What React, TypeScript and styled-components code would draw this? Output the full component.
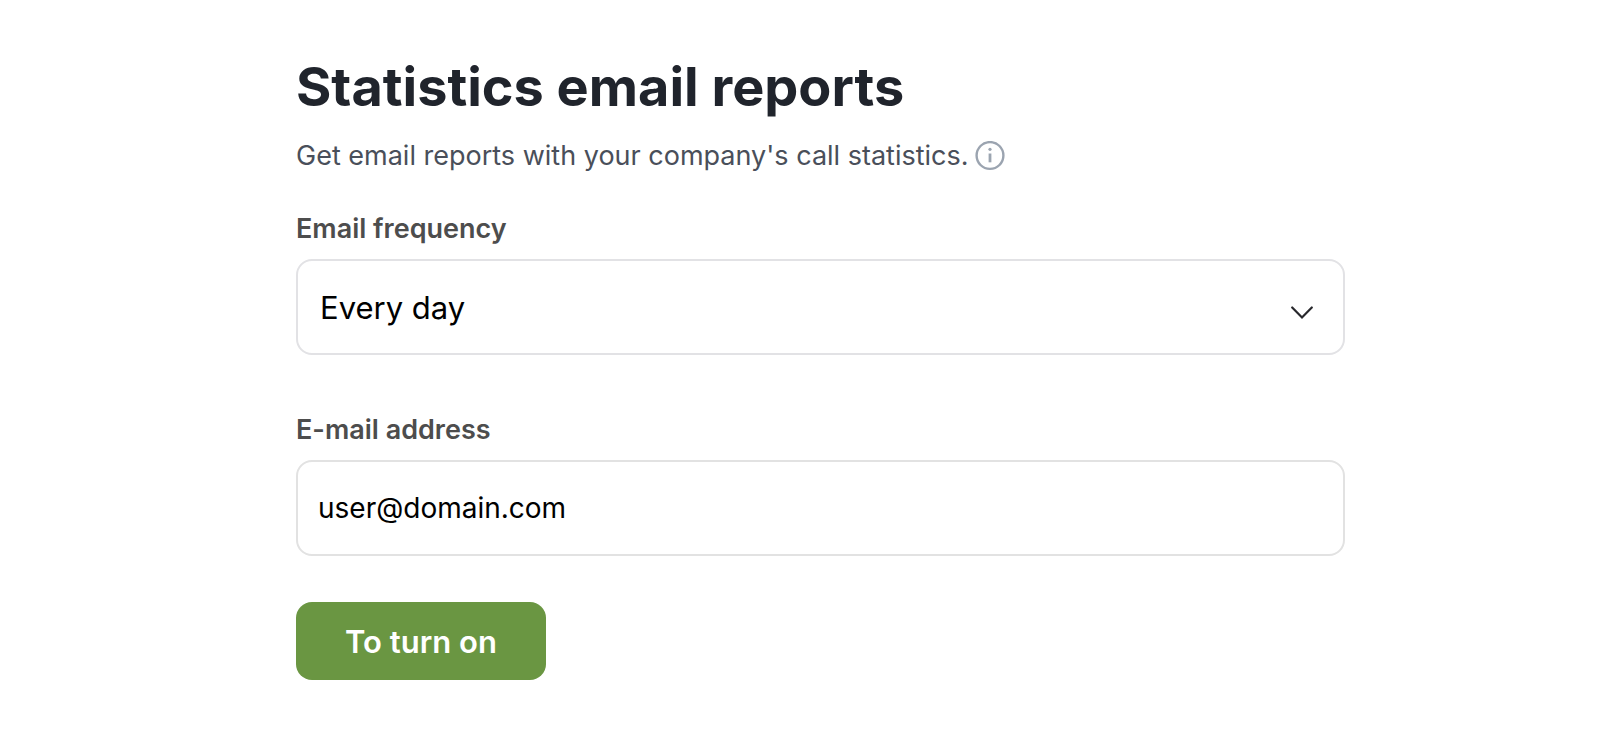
import React from "react";
import styled, { createGlobalStyle } from "styled-components";

const GlobalStyle = createGlobalStyle`
  *, *::before, *::after { box-sizing: border-box; }
  body { margin: 0; background: #fff; font-family: Inter, "Liberation Sans", sans-serif; }
`;
const Page = styled.main`
  padding: 53px 255px 48px 296px;
`;
const Title = styled.h1`
  margin: 0;
  font-size: 54px;
  line-height: 68px;
  font-weight: 700;
  color: #20242c;
`;
const Intro = styled.p`
  display: flex;
  align-items: center;
  gap: 6px;
  margin: 15px 0 35px;
  font-size: 27px;
  line-height: 40px;
  color: #4a4f5a;
`;
const InfoButton = styled.button`
  display: flex;
  flex: none;
  padding: 0;
  border: 0;
  background: none;
  color: #9ba4b0;
`;
const Form = styled.form`
  display: flex;
  flex-direction: column;
  align-items: stretch;
`;
const Field = styled.div<{ $gap: number }>`
  display: flex;
  flex-direction: column;
  gap: 12px;
  margin-bottom: ${(p) => p.$gap}px;
`;
const Label = styled.label`
  font-size: 27px;
  line-height: 36px;
  font-weight: 600;
  color: #4d4d4d;
`;
const SelectFrame = styled.div`
  display: grid;
  align-items: center;
  > * { grid-area: 1 / 1; }
  > svg { justify-self: end; margin: 12px 32px 0 0; pointer-events: none; }
`;
const Select = styled.select`
  appearance: none;
  width: 100%;
  height: 96px;
  padding: 0 22px;
  border: 2px solid #e2e2e5;
  border-radius: 16px;
  background: #fff;
  color: #000;
  font: 400 31px Inter, "Liberation Sans", sans-serif;
`;
const Input = styled.input`
  width: 100%;
  height: 96px;
  padding: 0 20px;
  border: 2px solid #e2e2e2;
  border-radius: 16px;
  background: #fff;
  color: #000;
  font: 400 28px Inter, "Liberation Sans", sans-serif;
`;
const Submit = styled.button`
  align-self: flex-start;
  height: 78px;
  padding: 0 49px;
  border: 0;
  border-radius: 16px;
  background: #6a9642;
  color: #fff;
  font: 600 31px Inter, "Liberation Sans", sans-serif;
`;

export default function App() {
  return (
    <>
      <GlobalStyle />
      <Page>
        <Title>Statistics email reports</Title>
        <Intro>
          Get email reports with your company's call statistics.
          <InfoButton type="button" aria-label="More information">
            <svg width="30" height="30" viewBox="0 0 30 30" fill="none" stroke="currentColor">
              <circle cx="15" cy="14.5" r="13.4" strokeWidth="2.4" />
              <path d="M15 12.5v8.8" strokeWidth="2.8" />
              <circle cx="15" cy="8.3" r="1.6" fill="currentColor" stroke="none" />
            </svg>
          </InfoButton>
        </Intro>
        <Form>
          <Field $gap={57}>
            <Label htmlFor="frequency">Email frequency</Label>
            <SelectFrame>
              <Select id="frequency"><option>Every day</option></Select>
              <svg width="22" height="14" viewBox="0 0 22 14" fill="none" stroke="#28282c" strokeWidth="2.2" strokeLinecap="round">
                <path d="M1.2 1.5l9.8 10 9.8-10" />
              </svg>
            </SelectFrame>
          </Field>
          <Field $gap={46}>
            <Label htmlFor="email">E-mail address</Label>
            <Input id="email" type="email" defaultValue="user@domain.com" />
          </Field>
          <Submit type="button">To turn on</Submit>
        </Form>
      </Page>
    </>
  );
}
